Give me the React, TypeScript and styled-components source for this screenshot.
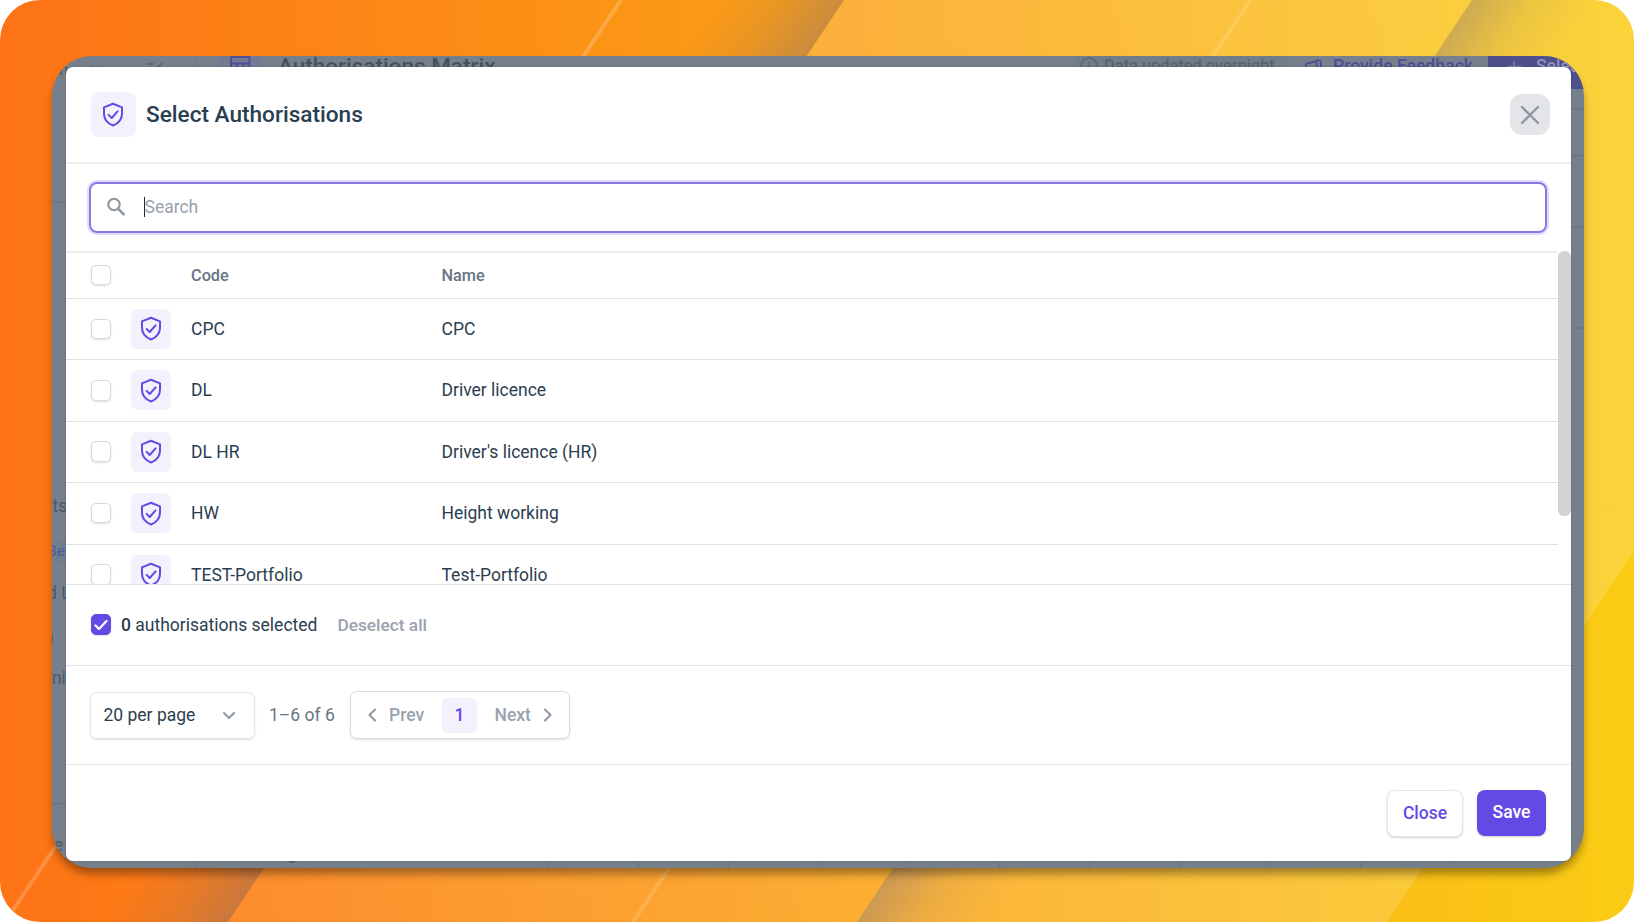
import React from "react";
import styled, { createGlobalStyle } from "styled-components";

const GlobalStyle = createGlobalStyle`
  * { box-sizing: border-box; }
  body { margin: 0; background: #fff; font-family: Roboto, "Liberation Sans", sans-serif; -webkit-font-smoothing: antialiased; }
  button, input { font-family: inherit; }
`;

const Stage = styled.div`
  position: relative;
  width: 1634px;
  height: 922px;
  padding: 56px 50px 54px 52px;
  border-radius: 40px;
  overflow: hidden;
`;

const Backdrop = styled.svg`
  position: absolute;
  inset: 0;
  z-index: -1;
`;

const Screen = styled.div`
  position: relative;
  width: 1532px;
  height: 812px;
  padding: 11px 13.5px 7px;
  border-radius: 40px;
  background: #75808c;
  box-shadow: 0 7px 9px -1px rgba(0, 0, 0, 0.36);
`;

const Behind = styled.div`
  position: absolute;
  inset: 0;
  border-radius: 40px;
  overflow: hidden;
`;

const BehindText = styled.span<{ $x: number; $y: number; $size: number; $weight?: number; $color?: string }>`
  position: absolute;
  left: ${(p) => p.$x}px;
  top: ${(p) => p.$y}px;
  font-size: ${(p) => p.$size}px;
  line-height: ${(p) => p.$size}px;
  font-weight: ${(p) => p.$weight ?? 400};
  color: ${(p) => p.$color ?? "#4b5a69"};
  white-space: nowrap;
`;

const BehindArt = styled.svg`
  position: absolute;
  inset: 0;
`;

const Modal = styled.section`
  position: relative;
  display: flex;
  flex-direction: column;
  width: 1505px;
  height: 794px;
  border-radius: 7px;
  background: #fff;
  overflow: hidden;
  color: #2b3e50;
  font-size: 17.5px;
  box-shadow: 0 0 2px rgba(40, 50, 70, 0.35);
`;

const Header = styled.header`
  display: flex;
  align-items: center;
  height: 97px;
  padding: 0 20.5px 0 25px;
  border-bottom: 2px solid #efeff0;
`;

const IconTile = styled.span<{ $size: number }>`
  display: flex;
  align-items: center;
  justify-content: center;
  flex: none;
  width: ${(p) => p.$size}px;
  height: ${(p) => p.$size}px;
  border-radius: 7px;
  background: #f4f1fd;
`;

const Title = styled.h1`
  margin: 1px auto 0 10.5px;
  font-size: 22.6px;
  font-weight: 500;
  line-height: 30px;
`;

const DismissButton = styled.button`
  display: flex;
  align-items: center;
  justify-content: center;
  width: 40px;
  height: 41px;
  padding: 0;
  border: 0;
  border-radius: 12px;
  background: #e3e5e9;
`;

const SearchArea = styled.div`
  height: 87px;
  padding: 18px 23.5px 0;
`;

const SearchField = styled.label`
  display: flex;
  align-items: center;
  height: 51px;
  padding: 0 0 2px 15px;
  border: 2px solid #8b76e6;
  border-radius: 8px;
  box-shadow: 0 0 0 2px #e2dcfa;
`;

const Caret = styled.i`
  width: 1px;
  height: 20px;
  margin-left: 17px;
  background: #1d2939;
`;

const Placeholder = styled.span`
  margin-left: -0.5px;
  color: #98a2ad;
`;

const TableArea = styled.div`
  display: flex;
  height: 333px;
  overflow: hidden;
`;

const Table = styled.div`
  flex: 1;
  border-top: 2px solid #ececed;
`;

const GRID = "40px 60.5px 250.5px 1fr";

const HeadRow = styled.div`
  display: grid;
  grid-template-columns: ${GRID};
  align-items: center;
  height: 46px;
  padding: 0 0 1px 25px;
  border-bottom: 1px solid #dfe1e4;
  color: #677584;
  font-size: 16.3px;
  font-weight: 500;
`;

const Row = styled.div`
  display: grid;
  grid-template-columns: ${GRID};
  align-items: center;
  height: 61.4px;
  padding: 0 0 0.5px 25px;
  border-bottom: 1px solid #dfe1e4;
`;

const ScrollTrack = styled.div`
  width: 12.5px;
`;

const ScrollThumb = styled.div`
  height: 265px;
  border-radius: 6px;
  background: #d2d2d2;
`;

const Checkbox = styled.span<{ $checked?: boolean }>`
  display: flex;
  align-items: center;
  justify-content: center;
  flex: none;
  width: 20.5px;
  height: 20.5px;
  border: 1.5px solid ${(p) => (p.$checked ? "#6549e4" : "#d6d9de")};
  border-radius: 5px;
  background: ${(p) => (p.$checked ? "#6549e4" : "#fff")};
  box-shadow: 0 1px 2px rgba(40, 50, 70, 0.15);
`;

const SelectionBar = styled.div`
  display: flex;
  align-items: center;
  height: 81px;
  padding: 0 25px 1px;
  border-top: 1.5px solid #e0e2e5;
`;

const SelectedCount = styled.span`
  margin-left: 10px;
  b { font-weight: 500; }
`;

const DeselectAll = styled.span`
  margin-left: 20px;
  color: #98a2ad;
  font-weight: 500;
  font-size: 17.3px;
`;

const PaginationBar = styled.div`
  display: flex;
  align-items: center;
  height: 99px;
  padding: 0 24px;
  border-top: 1.5px solid #e0e2e5;
`;

const PageSize = styled.div`
  display: flex;
  align-items: center;
  justify-content: space-between;
  width: 165px;
  height: 47px;
  padding: 0 18px 0 13px;
  border: 1.5px solid #e3e5e8;
  border-radius: 7px;
  box-shadow: 0 1px 2px rgba(40, 50, 70, 0.16);
`;

const Range = styled.span`
  width: 81px;
  margin-left: 14.5px;
  color: #677584;
`;

const Pager = styled.nav`
  display: flex;
  align-items: center;
  width: 220px;
  height: 48px;
  border: 1.5px solid #d9dce0;
  border-radius: 7px;
  color: #98a2ad;
  font-weight: 500;
  box-shadow: 0 1px 2px rgba(40, 50, 70, 0.16);
`;

const PagerStep = styled.span<{ $width: number; $pad: number; $gap: number }>`
  display: flex;
  align-items: center;
  gap: ${(p) => p.$gap}px;
  width: ${(p) => p.$width}px;
  padding-left: ${(p) => p.$pad}px;
`;

const PageNumber = styled.span`
  display: flex;
  align-items: center;
  justify-content: center;
  width: 35px;
  height: 35px;
  border-radius: 5px;
  background: #f4f1fd;
  color: #6549e4;
`;

const Footer = styled.footer`
  display: flex;
  align-items: flex-start;
  justify-content: flex-end;
  gap: 14px;
  flex: 1;
  padding: 24.5px 24.5px 0;
  border-top: 1.5px solid #e6e7ea;
`;

const Action = styled.button<{ $primary?: boolean }>`
  width: ${(p) => (p.$primary ? 69 : 76)}px;
  height: ${(p) => (p.$primary ? 46 : 47)}px;
  padding: 0 0 1px;
  border: ${(p) => (p.$primary ? "0" : "1.5px solid #e6e6ea")};
  border-radius: 8px;
  background: ${(p) => (p.$primary ? "#6549e4" : "#fff")};
  color: ${(p) => (p.$primary ? "#fff" : "#6549e4")};
  font-size: 17.5px;
  font-weight: 500;
  box-shadow: 0 1px 2px rgba(40, 50, 80, 0.22);
`;

function Shield() {
  return (
    <svg width="22" height="25" viewBox="0 0 22 25" fill="none" stroke="#6549e4" strokeWidth="2" strokeLinejoin="round" strokeLinecap="round">
      <path d="M11 1.800 L20 5.400 V11.500 C20 17 16.800 21.300 11 23.500 C5.200 21.300 2 17 2 11.500 V5.400 Z" />
      <path d="M6.600 12.900 L9.700 16 L15.600 9.400" />
    </svg>
  );
}

function Chevron({ d, w, h }: { d: string; w: number; h: number }) {
  return (
    <svg width={w} height={h} fill="none" stroke="#8d98a3" strokeWidth="2" strokeLinecap="round" strokeLinejoin="round">
      <path d={d} />
    </svg>
  );
}

function StripedBackdrop() {
  return (
    <Backdrop width="1634" height="922" viewBox="0 0 1634 922">
      <defs>
        <linearGradient id="base" x1="0" x2="1" y1="0" y2="0">
          <stop offset="0" stopColor="#fd7316" />
          <stop offset="1" stopColor="#facc15" />
        </linearGradient>
        <linearGradient id="shadeLeft" gradientUnits="userSpaceOnUse" x1="844" y1="0" x2="757" y2="-58">
          <stop offset="0" stopColor="#736a80" stopOpacity="0.37" />
          <stop offset="0.5" stopColor="#736a80" stopOpacity="0.14" />
          <stop offset="1" stopColor="#736a80" stopOpacity="0" />
        </linearGradient>
        <linearGradient id="shadeRight" gradientUnits="userSpaceOnUse" x1="1472" y1="0" x2="1559" y2="58">
          <stop offset="0" stopColor="#736a80" stopOpacity="0.34" />
          <stop offset="0.5" stopColor="#736a80" stopOpacity="0.1" />
          <stop offset="1" stopColor="#736a80" stopOpacity="0" />
        </linearGradient>
        <linearGradient id="veil" x1="0" x2="1" y1="1" y2="0">
          <stop offset="0" stopColor="#fff" stopOpacity="0.1" />
          <stop offset="0.5" stopColor="#fff" stopOpacity="0.15" />
          <stop offset="1" stopColor="#fff" stopOpacity="0.18" />
        </linearGradient>
      </defs>
      <rect width="1634" height="922" fill="url(#base)" />
      <path d="M694 0 H844 L228 922 H78 Z" fill="url(#shadeLeft)" />
      <path d="M844 0 H1472 L857 922 H228 Z" fill="url(#veil)" />
      <path d="M1472 0 H1634 V551 L1387 922 H857 Z" fill="#fff" fillOpacity="0.16" />
      <path d="M1472 0 H1634 L1007 922 H857 Z" fill="url(#shadeRight)" />
      <path d="M621 0 L5 922" stroke="#fff" strokeOpacity="0.2" strokeWidth="4" />
      <path d="M1250.500 0 L633 922" stroke="#fff" strokeOpacity="0.15" strokeWidth="4" />
    </Backdrop>
  );
}

function PageBehind() {
  return (
    <Behind>
      <BehindArt width="1532" height="812" fill="none">
        <path d="M144.500 0 V812" stroke="#6c7784" />
        <path d="M0 146 H14 M0 747.500 H14 M1518 53 H1532 M1518 99.500 H1532 M1518 171 H1532 M1518 272 H1532" stroke="#697582" strokeWidth="1.500" />
        <path d="M496.500 804 V812 M587 804 V812 M676.500 804 V812 M767 804 V812 M857 804 V812 M947.500 804 V812 M1037.500 804 V812 M1128 804 V812 M1218 804 V812 M1308.500 804 V812 M1399 804 V812" stroke="#697582" />
        <rect x="0" y="485" width="14" height="21" fill="#707c8f" />
        <rect x="1436" y="-10" width="120" height="43" rx="4" fill="#4f4f8b" />
        <rect x="166" y="-14" width="44" height="36" rx="5" fill="#737a92" />
        <rect x="1022" y="-10" width="214" height="36" fill="#717d89" />
        <path d="M179 1 H197.500 V16 M179 1 V16 M179 7.500 H197 M185 7.500 V16 M191.500 7.500 V16" stroke="#514f9a" strokeWidth="2" />
        <path d="M40 10 L45 15 L50 10 M94 8 H102 M110 7 L105 12" stroke="#566370" strokeWidth="1.500" />
        <circle cx="1037" cy="10" r="8" stroke="#586674" strokeWidth="1.500" />
        <path d="M1037 6 V11" stroke="#586674" strokeWidth="1.500" />
        <path d="M1254 12 V9 Q1254 7 1257 7 L1266 4.500 Q1269 4 1269 7 V13 M1264 5.500 L1266 13" stroke="#4d4e93" strokeWidth="1.800" />
        <path d="M1462 5 V18 M1455.500 10.500 H1469" stroke="#8283b2" strokeWidth="1.500" />
      </BehindArt>
      <BehindText $x={226} $y={-1} $size={22.5} $weight={500} $color="#44525f">Authorisations Matrix</BehindText>
      <BehindText $x={1052} $y={1.5} $size={16.4} $weight={500} $color="#566472">Data updated overnight</BehindText>
      <BehindText $x={1281} $y={1.5} $size={17.6} $weight={500} $color="#4d4e93">Provide Feedback</BehindText>
      <BehindText $x={1484} $y={1.5} $size={17.5} $weight={500} $color="#9293bb">Select</BehindText>
      <BehindText $x={7} $y={5} $size={17}>n</BehindText>
      <BehindText $x={0.5} $y={442} $size={17.5}>ts</BehindText>
      <BehindText $x={-5} $y={488} $size={15.5} $color="#4b5c9a">Bet</BehindText>
      <BehindText $x={-5} $y={529} $size={17.5}>d L</BehindText>
      <BehindText $x={-8} $y={573} $size={17.5} $color="#3f4b8a">n</BehindText>
      <BehindText $x={-6} $y={614} $size={17.5}>rni</BehindText>
      <BehindText $x={2} $y={781} $size={17.5}>e</BehindText>
      <BehindText $x={235} $y={789} $size={17.5}>g</BehindText>
    </Behind>
  );
}

const rows = [
  ["CPC", "CPC"],
  ["DL", "Driver licence"],
  ["DL HR", "Driver's licence (HR)"],
  ["HW", "Height working"],
  ["TEST-Portfolio", "Test-Portfolio"],
];

export default function App() {
  return (
    <>
      <GlobalStyle />
      <Stage>
        <StripedBackdrop />
        <Screen>
          <PageBehind />
          <Modal>
            <Header>
              <IconTile $size={45}><Shield /></IconTile>
              <Title>Select Authorisations</Title>
              <DismissButton aria-label="Close">
                <svg width="20" height="20" stroke="#8d98a3" strokeWidth="2.300" strokeLinecap="round">
                  <path d="M2 2 L18 18 M18 2 L2 18" />
                </svg>
              </DismissButton>
            </Header>
            <SearchArea>
              <SearchField>
                <svg width="21" height="20" fill="none" stroke="#8d98a3" strokeWidth="2.200">
                  <circle cx="8" cy="7.500" r="5.700" />
                  <path d="M12 11.600 L18.400 18" strokeWidth="2.500" />
                </svg>
                <Caret />
                <Placeholder>Search</Placeholder>
              </SearchField>
            </SearchArea>
            <TableArea>
              <Table>
                <HeadRow>
                  <Checkbox />
                  <span />
                  <span>Code</span>
                  <span>Name</span>
                </HeadRow>
                {rows.map(([code, name]) => (
                  <Row key={code}>
                    <Checkbox />
                    <IconTile $size={40}><Shield /></IconTile>
                    <span>{code}</span>
                    <span>{name}</span>
                  </Row>
                ))}
              </Table>
              <ScrollTrack><ScrollThumb /></ScrollTrack>
            </TableArea>
            <SelectionBar>
              <Checkbox $checked>
                <svg width="14" height="12" fill="none" stroke="#fff" strokeWidth="2.200" strokeLinecap="round" strokeLinejoin="round">
                  <path d="M1.500 6.500 L5 10 L12.500 2" />
                </svg>
              </Checkbox>
              <SelectedCount><b>0</b> authorisations selected</SelectedCount>
              <DeselectAll>Deselect all</DeselectAll>
            </SelectionBar>
            <PaginationBar>
              <PageSize>
                20 per page
                <Chevron w={14} h={9} d="M2 2 L7 7 L12 2" />
              </PageSize>
              <Range>1–6 of 6</Range>
              <Pager>
                <PagerStep $width={91} $pad={16} $gap={12}>
                  <Chevron w={10} h={14} d="M8 1.500 L2.500 7 L8 12.500" />
                  Prev
                </PagerStep>
                <PageNumber>1</PageNumber>
                <PagerStep $width={90} $pad={17.5} $gap={12}>
                  Next
                  <Chevron w={10} h={14} d="M2 1.500 L7.500 7 L2 12.500" />
                </PagerStep>
              </Pager>
            </PaginationBar>
            <Footer>
              <Action>Close</Action>
              <Action $primary>Save</Action>
            </Footer>
          </Modal>
        </Screen>
      </Stage>
    </>
  );
}
